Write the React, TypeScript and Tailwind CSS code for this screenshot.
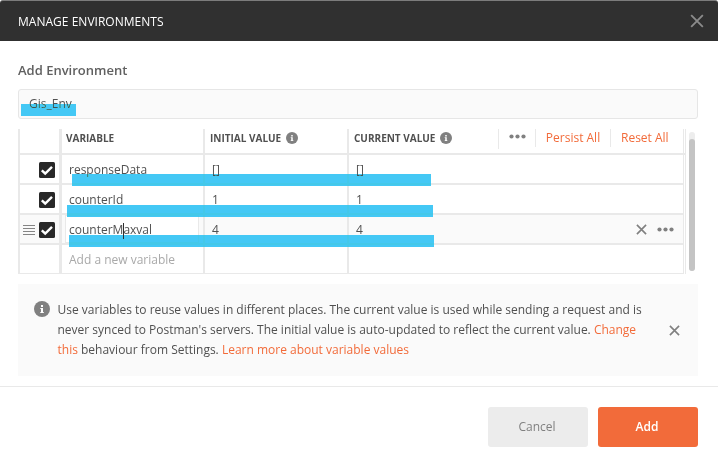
import React from "react";

const font = "font-['Open_Sans','Noto_Sans',sans-serif]";

function Cross({ size, color, width }: { size: number; color: string; width: number }) {
  return (
    <svg className="shrink-0" width={size} height={size} viewBox="0 0 12 12" fill="none" stroke={color} strokeWidth={width}>
      <path d="M1 1L11 11M11 1L1 11" />
    </svg>
  );
}

function Info({ size }: { size: number }) {
  return (
    <svg className="shrink-0" width={size} height={size} viewBox="0 0 16 16">
      <circle cx="8" cy="8" r="8" fill="#808080" />
      <path d="M7 4h2v2H7zM6.3 7H9v4h.8v1H6.3v-1H7V8h-.7z" fill="#fff" />
    </svg>
  );
}

function Dots() {
  return (
    <svg className="shrink-0" width="17" height="5" viewBox="0 0 17 5" fill="#808080">
      <circle cx="2.5" cy="2.5" r="2.1" />
      <circle cx="8.5" cy="2.5" r="2.1" />
      <circle cx="14.5" cy="2.5" r="2.1" />
    </svg>
  );
}

function Check() {
  return (
    <svg className="shrink-0" width="16" height="16" viewBox="0 0 16 16">
      <rect width="16" height="16" rx="1.5" fill="#282828" />
      <path d="M2.8 8.4L6.2 11.5L13 4.8" fill="none" stroke="#fff" strokeWidth="2.4" />
    </svg>
  );
}

function Grip() {
  return (
    <svg className="shrink-0" width="12" height="11" viewBox="0 0 12 11" fill="#858585" shapeRendering="crispEdges">
      <path d="M0 0h12v1H0zM0 3h12v1H0zM0 6h12v1H0zM0 9h12v1H0z" />
    </svg>
  );
}

const rows = [
  { name: "responseData", value: "[]", bar: "left-[10px] top-[19px] w-[359px]" },
  { name: "counterId", value: "1", bar: "left-[5px] top-5 w-[366px]" },
  { name: "counterMaxval", value: "4", bar: "left-[7px] top-5 w-[365px]", active: true },
];

const line = "border-[#e9e9e9]";

export default function App() {
  return (
    <div className={`flex h-[465px] w-[718px] flex-col overflow-hidden bg-white text-[12px] text-[#505050] ${font}`}>
      <header className="flex h-[41px] shrink-0 items-center justify-between rounded-t-[3px] border-t border-[#7c7c7c] bg-[#303030] pr-[14px] pl-[18px]">
        <h1 className="pt-[2px] text-[12px] tracking-[0.02px] text-white">MANAGE ENVIRONMENTS</h1>
        <Cross size={14} color="#8b8b8b" width={1.6} />
      </header>

      <main className="flex h-[345px] shrink-0 flex-col pr-5 pl-[18px]">
        <h2 className="mt-[20px] h-[18px] text-[13px] leading-[18px] font-semibold text-[#606060]">Add Environment</h2>
        <div className="relative mt-[10px] h-[30px] shrink-0 rounded-[3px] border border-[#e6e6e6] bg-[#fafafa] pl-[10px] leading-[28px]">
          Gis_Env
          <span className="absolute top-[14px] left-[2px] h-3 w-[55px] bg-[#44c8f5] mix-blend-darken" />
        </div>

        <section className="mt-[10px] flex h-[145px] shrink-0">
          <div className="flex w-[668px] shrink-0 flex-col border-r border-[#e9e9e9]">
            <div className={`flex h-[26px] shrink-0 border-b-2 ${line} text-[10px] leading-[19px] font-bold`}>
              <div className={`w-[44px] shrink-0 border-r-[3px] border-l-2 ${line}`} />
              <div className={`w-[143px] shrink-0 border-r-2 ${line} pl-1`}>VARIABLE</div>
              <div className={`flex w-[144px] shrink-0 border-r-2 ${line} pl-[5px]`}>
                <span className="w-[76px] shrink-0 whitespace-nowrap">INITIAL VALUE</span>
                <span className="mt-[3px]"><Info size={12} /></span>
              </div>
              <div className="flex w-[149px] shrink-0 pl-[5px]">
                <span className="w-[86px] shrink-0 whitespace-nowrap">CURRENT VALUE</span>
                <span className="mt-[3px]"><Info size={12} /></span>
              </div>
              <div className={`flex h-5 w-[37px] shrink-0 justify-center border-l ${line} pt-[5px]`}><Dots /></div>
              <div className={`h-[18px] w-[75px] shrink-0 border-l ${line} text-center text-[12px] leading-[18px] font-normal text-[#f26b3a]`}>Persist All</div>
              <div className={`h-[18px] w-[73px] shrink-0 border-l ${line} pl-[10px] text-[12px] leading-[18px] font-normal text-[#f26b3a]`}>Reset All</div>
              <div className={`w-px shrink-0 border-l ${line}`} />
            </div>
            {rows.map((r) => (
              <div key={r.name} className={`flex h-[30px] w-[666px] shrink-0 border-r border-b-2 ${line} leading-[29px] ${r.active ? "bg-[#fafafa]" : ""}`}>
                <div className={`flex w-[44px] shrink-0 items-center justify-end gap-1 border-r-[3px] border-l-2 ${line} pt-[2px] pr-1`}>
                  {r.active && <Grip />}
                  <Check />
                </div>
                <div className={`relative w-[143px] shrink-0 border-r-2 ${line}`}>
                  <div className={r.active ? "mr-1 ml-[3px] h-7 border border-[#e9e9e9] bg-white pl-[3px] leading-[27px]" : "h-7 pl-[7px]"}>
                    {r.active ? <>counterM<span className="mr-[-1px] inline-block h-4 w-px bg-[#303030] align-middle" />axval</> : r.name}
                  </div>
                  <span className={`absolute z-10 h-3 bg-[#44c8f5] mix-blend-darken ${r.bar}`} />
                </div>
                <div className={`w-[144px] shrink-0 border-r-2 ${line} pl-[7px]`}>{r.value}</div>
                <div className="flex flex-1 justify-between pr-[9px] pl-[7px]">
                  {r.value}
                  {r.active && <span className="flex items-center gap-[10px]"><Cross size={11} color="#808080" width={1.8} /><Dots /></span>}
                </div>
              </div>
            ))}
            <div className={`flex h-[29px] w-[666px] shrink-0 border-r border-b ${line} leading-[29px]`}>
              <div className={`w-[44px] shrink-0 border-r-[3px] border-l-2 ${line}`} />
              <div className={`w-[143px] shrink-0 border-r-2 ${line} pl-[7px] text-[#a9a9a9]`}>Add a new variable</div>
              <div className={`w-[144px] shrink-0 border-r-2 ${line}`} />
            </div>
          </div>
          <div className="mt-[3px] ml-[3px] h-[139px] w-[6px] shrink-0 rounded-full bg-[#ededed] pt-[7px]">
            <div className="h-[132px] rounded-full bg-[#c4c4c4]" />
          </div>
        </section>

        <section className="mt-[10px] flex h-[92px] shrink-0 bg-[#fafafa] pl-4">
          <span className="mt-[17px]"><Info size={16} /></span>
          <p className="mt-4 ml-[7.5px] w-[600px] shrink-0 leading-5 whitespace-nowrap">
            Use variables to reuse values in different places. The current value is used while sending a request and is<br />
            never synced to Postman's servers. The initial value is auto-updated to reflect the current value. <span className="text-[#f26b3a]">Change</span><br />
            <span className="text-[#f26b3a]">this</span> behaviour from Settings. <span className="text-[#f26b3a]">Learn more about variable values</span>
          </p>
          <span className="mt-[41px] ml-[11px]"><Cross size={11} color="#808080" width={1.8} /></span>
        </section>
      </main>

      <footer className="flex flex-1 justify-end gap-[10px] border-t border-[#e9e9e9] pt-5 pr-5">
        <button className="h-10 w-[100px] rounded-[3px] bg-[#ececec] pr-[2px] text-[#808080]">Cancel</button>
        <button className="h-10 w-[100px] rounded-[3px] bg-[#f26b3a] pr-[2px] font-semibold text-white">Add</button>
      </footer>
    </div>
  );
}
